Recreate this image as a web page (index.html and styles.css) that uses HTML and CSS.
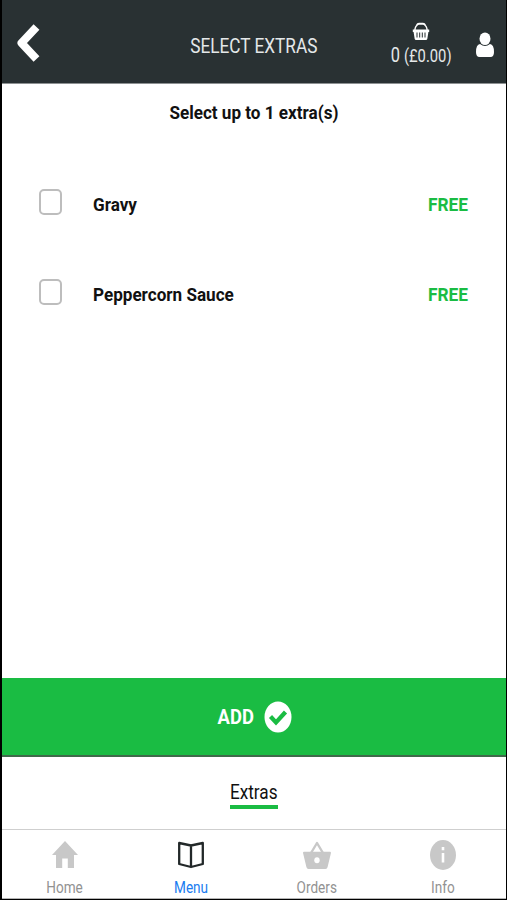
FILE: index.html
```html
<!DOCTYPE html>
<html lang="en">
<head>
  <meta charset="UTF-8">
  <meta name="viewport" content="width=device-width, initial-scale=1.0">
  <title>Select Extras</title>
  <link rel="stylesheet" href="styles.css">
</head>
<body>
  <div class="app">
    <header class="header">
      <button class="back-button" aria-label="Back">
        <svg width="26" height="40" viewBox="0 0 26 40">
          <path d="M20.500 4 L5.500 20 L20.500 36" fill="none" stroke="#fff" stroke-width="8" stroke-linejoin="round"/>
        </svg>
      </button>
      <h1 class="title"><span class="narrow">SELECT EXTRAS</span></h1>
      <div class="basket">
        <svg width="18" height="19" viewBox="0 0 18 19">
          <path d="M2.800 8.500 Q3.200 4 5.500 2.800 M15.200 8.500 Q14.800 4 12.500 2.800" fill="none" stroke="#fff" stroke-width="1.400"/>
          <path d="M5 3 Q5.500 1.700 7 1.700 H11 Q12.500 1.700 13 3" fill="none" stroke="#fff" stroke-width="2"/>
          <path d="M0.800 7.500 H17.200 V10 H16.400 L15.300 17 Q15 18 14 18 H4 Q3 18 2.700 17 L1.600 10 H0.800 Z" fill="#fff"/>
          <path d="M5 10.500 V15.500 M7.700 10.500 V15.500 M10.300 10.500 V15.500 M13 10.500 V15.500" stroke="#293133" stroke-width="1"/>
        </svg>
        <span class="basket-total narrow">0 <small>(£0.00)</small></span>
      </div>
      <button class="user-button" aria-label="Account">
        <svg width="18" height="26" viewBox="0 0 18 26">
          <path d="M4 12 Q0 12.500 0 20 Q0 25 3.500 25 H14.500 Q18 25 18 20 Q18 12.500 14 12 Q9 16 4 12 Z" fill="#fff"/>
          <ellipse cx="9" cy="6.800" rx="5.500" ry="6.300" fill="#fff"/>
        </svg>
      </button>
    </header>

    <main class="content">
      <h2 class="subtitle"><span class="narrow">Select up to 1 extra(s)</span></h2>
      <ul class="extras">
        <li class="extra">
          <input type="checkbox" class="extra-check" id="gravy">
          <label class="extra-name narrow" for="gravy">Gravy</label>
          <span class="extra-price narrow">FREE</span>
        </li>
        <li class="extra">
          <input type="checkbox" class="extra-check" id="peppercorn">
          <label class="extra-name narrow" for="peppercorn">Peppercorn Sauce</label>
          <span class="extra-price narrow">FREE</span>
        </li>
      </ul>
    </main>

    <button class="add-button">
      <span class="add-label narrow">ADD</span>
      <svg width="28" height="32" viewBox="0 0 28 32">
        <ellipse cx="14" cy="16" rx="13.500" ry="15.500" fill="#fff"/>
        <path d="M6.500 15.500 L12 21.500 L21.500 11" fill="none" stroke="#1abc43" stroke-width="4.200"/>
      </svg>
    </button>

    <div class="steps">
      <div class="step active"><span class="narrow">Extras</span></div>
    </div>

    <nav class="tabs">
      <a class="tab">
        <svg width="26" height="28" viewBox="0 0 26 28">
          <path d="M13 0 L26 14 H22 V27 H15.800 V17.500 H10.200 V27 H4 V14 H0 Z" fill="#c8c8c8"/>
        </svg>
        <span class="narrow">Home</span>
      </a>
      <a class="tab active">
        <svg width="26" height="28" viewBox="0 0 26 28">
          <path d="M13 4.500 L1.200 2 V23 L13 26 L24.800 23 V2 Z M13 4.500 V26" fill="none" stroke="#222829" stroke-width="2.300" stroke-linejoin="round"/>
        </svg>
        <span class="narrow">Menu</span>
      </a>
      <a class="tab">
        <svg width="28" height="28" viewBox="0 0 28 28">
          <path d="M8 12 L14 2 L20 12" fill="none" stroke="#c8c8c8" stroke-width="2.400" stroke-linejoin="round"/>
          <path d="M1 10.800 H27 Q28.200 10.800 27.900 12.300 L24.600 26 Q24.200 28 22.500 28 H5.500 Q3.800 28 3.400 26 L0.100 12.300 Q-0.200 10.800 1 10.800 Z" fill="#c8c8c8"/>
          <ellipse cx="14" cy="19.300" rx="2.700" ry="3" fill="#fff"/>
        </svg>
        <span class="narrow">Orders</span>
      </a>
      <a class="tab">
        <svg width="26" height="30" viewBox="0 0 26 30">
          <ellipse cx="13" cy="15" rx="13" ry="15" fill="#c8c8c8"/>
          <path d="M13 7 V10.300 M13 13 V22.500" stroke="#fff" stroke-width="2.600"/>
        </svg>
        <span class="narrow">Info</span>
      </a>
    </nav>
  </div>
</body>
</html>
```

FILE: styles.css
```css
* {
  box-sizing: border-box;
}
body {
  margin: 0;
  background-color: #000;
  font-family: Roboto, "Liberation Sans", sans-serif;
}
button {
  border: none;
  padding: 0;
  background: none;
  font-family: inherit;
}
svg {
  display: block;
}
.app {
  display: flex;
  flex-direction: column;
  height: 900px;
  border: solid #000;
  border-width: 0 1px 1px 2px;
  background-color: #fff;
}
/* condensed lettering */
.narrow {
  display: inline-block;
  white-space: nowrap;
  transform: scaleX(0.86);
}
.header {
  display: grid;
  grid-template-columns: 126px 252px 82px 44px;
  height: 84px;
  background-color: #293133;
  border-bottom: 1px solid #8d9192;
  color: #fff;
}
.back-button {
  padding: 23px 0 0 14px;
  justify-self: start;
  align-self: start;
}
.title {
  margin: 34px 0 0;
  font-size: 20px;
  line-height: 24px;
  font-weight: 400;
  text-align: center;
  color: #e4e8e9;
}
.basket {
  display: flex;
  flex-direction: column;
  align-items: center;
  padding-top: 22px;
  color: #e4e8e9;
}
.basket-total {
  margin-top: 2px;
  font-size: 20px;
  line-height: 24px;
  transform: scaleX(0.82);
}
.basket-total small {
  font-size: 18px;
}
.user-button {
  padding: 32px 0 0 14px;
  justify-self: start;
  align-self: start;
}
.content {
  flex: 1;
}
.subtitle {
  margin: 17px 0 0;
  font-size: 19px;
  line-height: 24px;
  font-weight: 700;
  text-align: center;
  color: #111;
}
.subtitle .narrow {
  transform: scaleX(0.9);
}
.extras {
  list-style: none;
  margin: 33px 0 0;
  padding: 0;
}
.extra {
  display: flex;
  align-items: center;
  height: 90px;
  padding: 2px 38px 0 37px;
  font-size: 19px;
  font-weight: 700;
}
.extra-check {
  appearance: none;
  width: 23px;
  height: 26px;
  margin: -4px 31px 0 0;
  border: 2px solid #bdbdbd;
  border-radius: 5px;
  background-color: #fff;
}
.extra-name {
  color: #111;
  transform: scaleX(0.9);
  transform-origin: left;
}
.extra-price {
  margin-left: auto;
  color: #1abc43;
  transform: scaleX(0.91);
  transform-origin: right;
}
.add-button {
  display: flex;
  align-items: center;
  justify-content: center;
  gap: 9px;
  height: 79px;
  background-color: #1abc43;
  border-bottom: 2px solid #3f6a4a;
  color: #fff;
}
.add-label {
  font-size: 20px;
  line-height: 24px;
  padding-top: 1px;
  font-weight: 700;
  transform: scaleX(0.92);
}
.steps {
  display: flex;
  justify-content: center;
  height: 72px;
  padding-top: 23px;
}
.step {
  width: 48px;
  height: 29px;
  font-size: 20px;
  line-height: 24px;
  display: flex;
  justify-content: center;
  color: #111;
}
.step.active {
  border-bottom: 4px solid #1abc43;
}
.tabs {
  display: grid;
  grid-template-columns: repeat(4, 126px);
  height: 70px;
  border-top: 1px solid #cfcfcf;
  border-bottom: 1px solid #b5b5b5;
}
.tab {
  display: grid;
  grid-template-rows: 50px 16px;
  justify-items: center;
  align-items: center;
  font-size: 16px;
  line-height: 16px;
  color: #929292;
}
.tab .narrow {
  transform: scaleX(0.85);
}
.tab.active {
  color: #1a7cf0;
}
```
